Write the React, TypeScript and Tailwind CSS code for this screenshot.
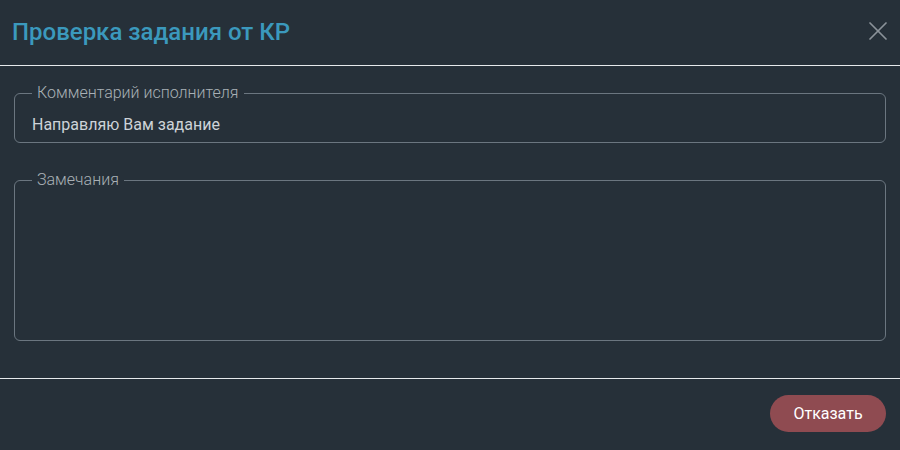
import { X } from "lucide-react";

const Field = ({ label, value, tall }: { label: string; value?: string; tall?: boolean }) => {
  return (
    <fieldset
      className={`border border-[#6b7680] rounded-md px-[17px] ${tall ? "h-[170px]" : "h-[59px]"}`}
    >
      <legend className="px-[5px] text-[16px] leading-[18px] text-[#a9b0b6] font-light">{label}</legend>
      {value && <div className="text-[16px] leading-[20px] text-[#cdd3d8] mt-[13px]">{value}</div>}
    </fieldset>
  );
};

const App = () => {
  return (
    <div
      className="w-[900px] h-[450px] bg-[#263039] flex flex-col"
      style={{ fontFamily: "Roboto, 'Liberation Sans', sans-serif" }}
    >
      <div className="h-[66px] flex items-center justify-between pl-[12px] pr-[6px] border-b border-[#e6e9ec]">
        <h1 className="text-[24px] font-medium text-[#3b99bd] mt-[-2px]">Проверка задания от КР</h1>
        <button className="text-[#8b9299] mt-[-4px]">
          <X size={32} strokeWidth={1.3} />
        </button>
      </div>
      <div className="flex flex-col gap-[28px] px-[14px] pt-[18px] h-[313px] border-b border-[#e6e9ec]">
        <Field label="Комментарий исполнителя" value="Направляю Вам задание" />
        <Field label="Замечания" tall />
      </div>
      <div className="flex justify-end px-[14px] pt-[16px]">
        <button className="h-[37px] w-[116px] rounded-full bg-[#8f4b51] text-white text-[16px]">Отказать</button>
      </div>
    </div>
  );
};

export default App;
